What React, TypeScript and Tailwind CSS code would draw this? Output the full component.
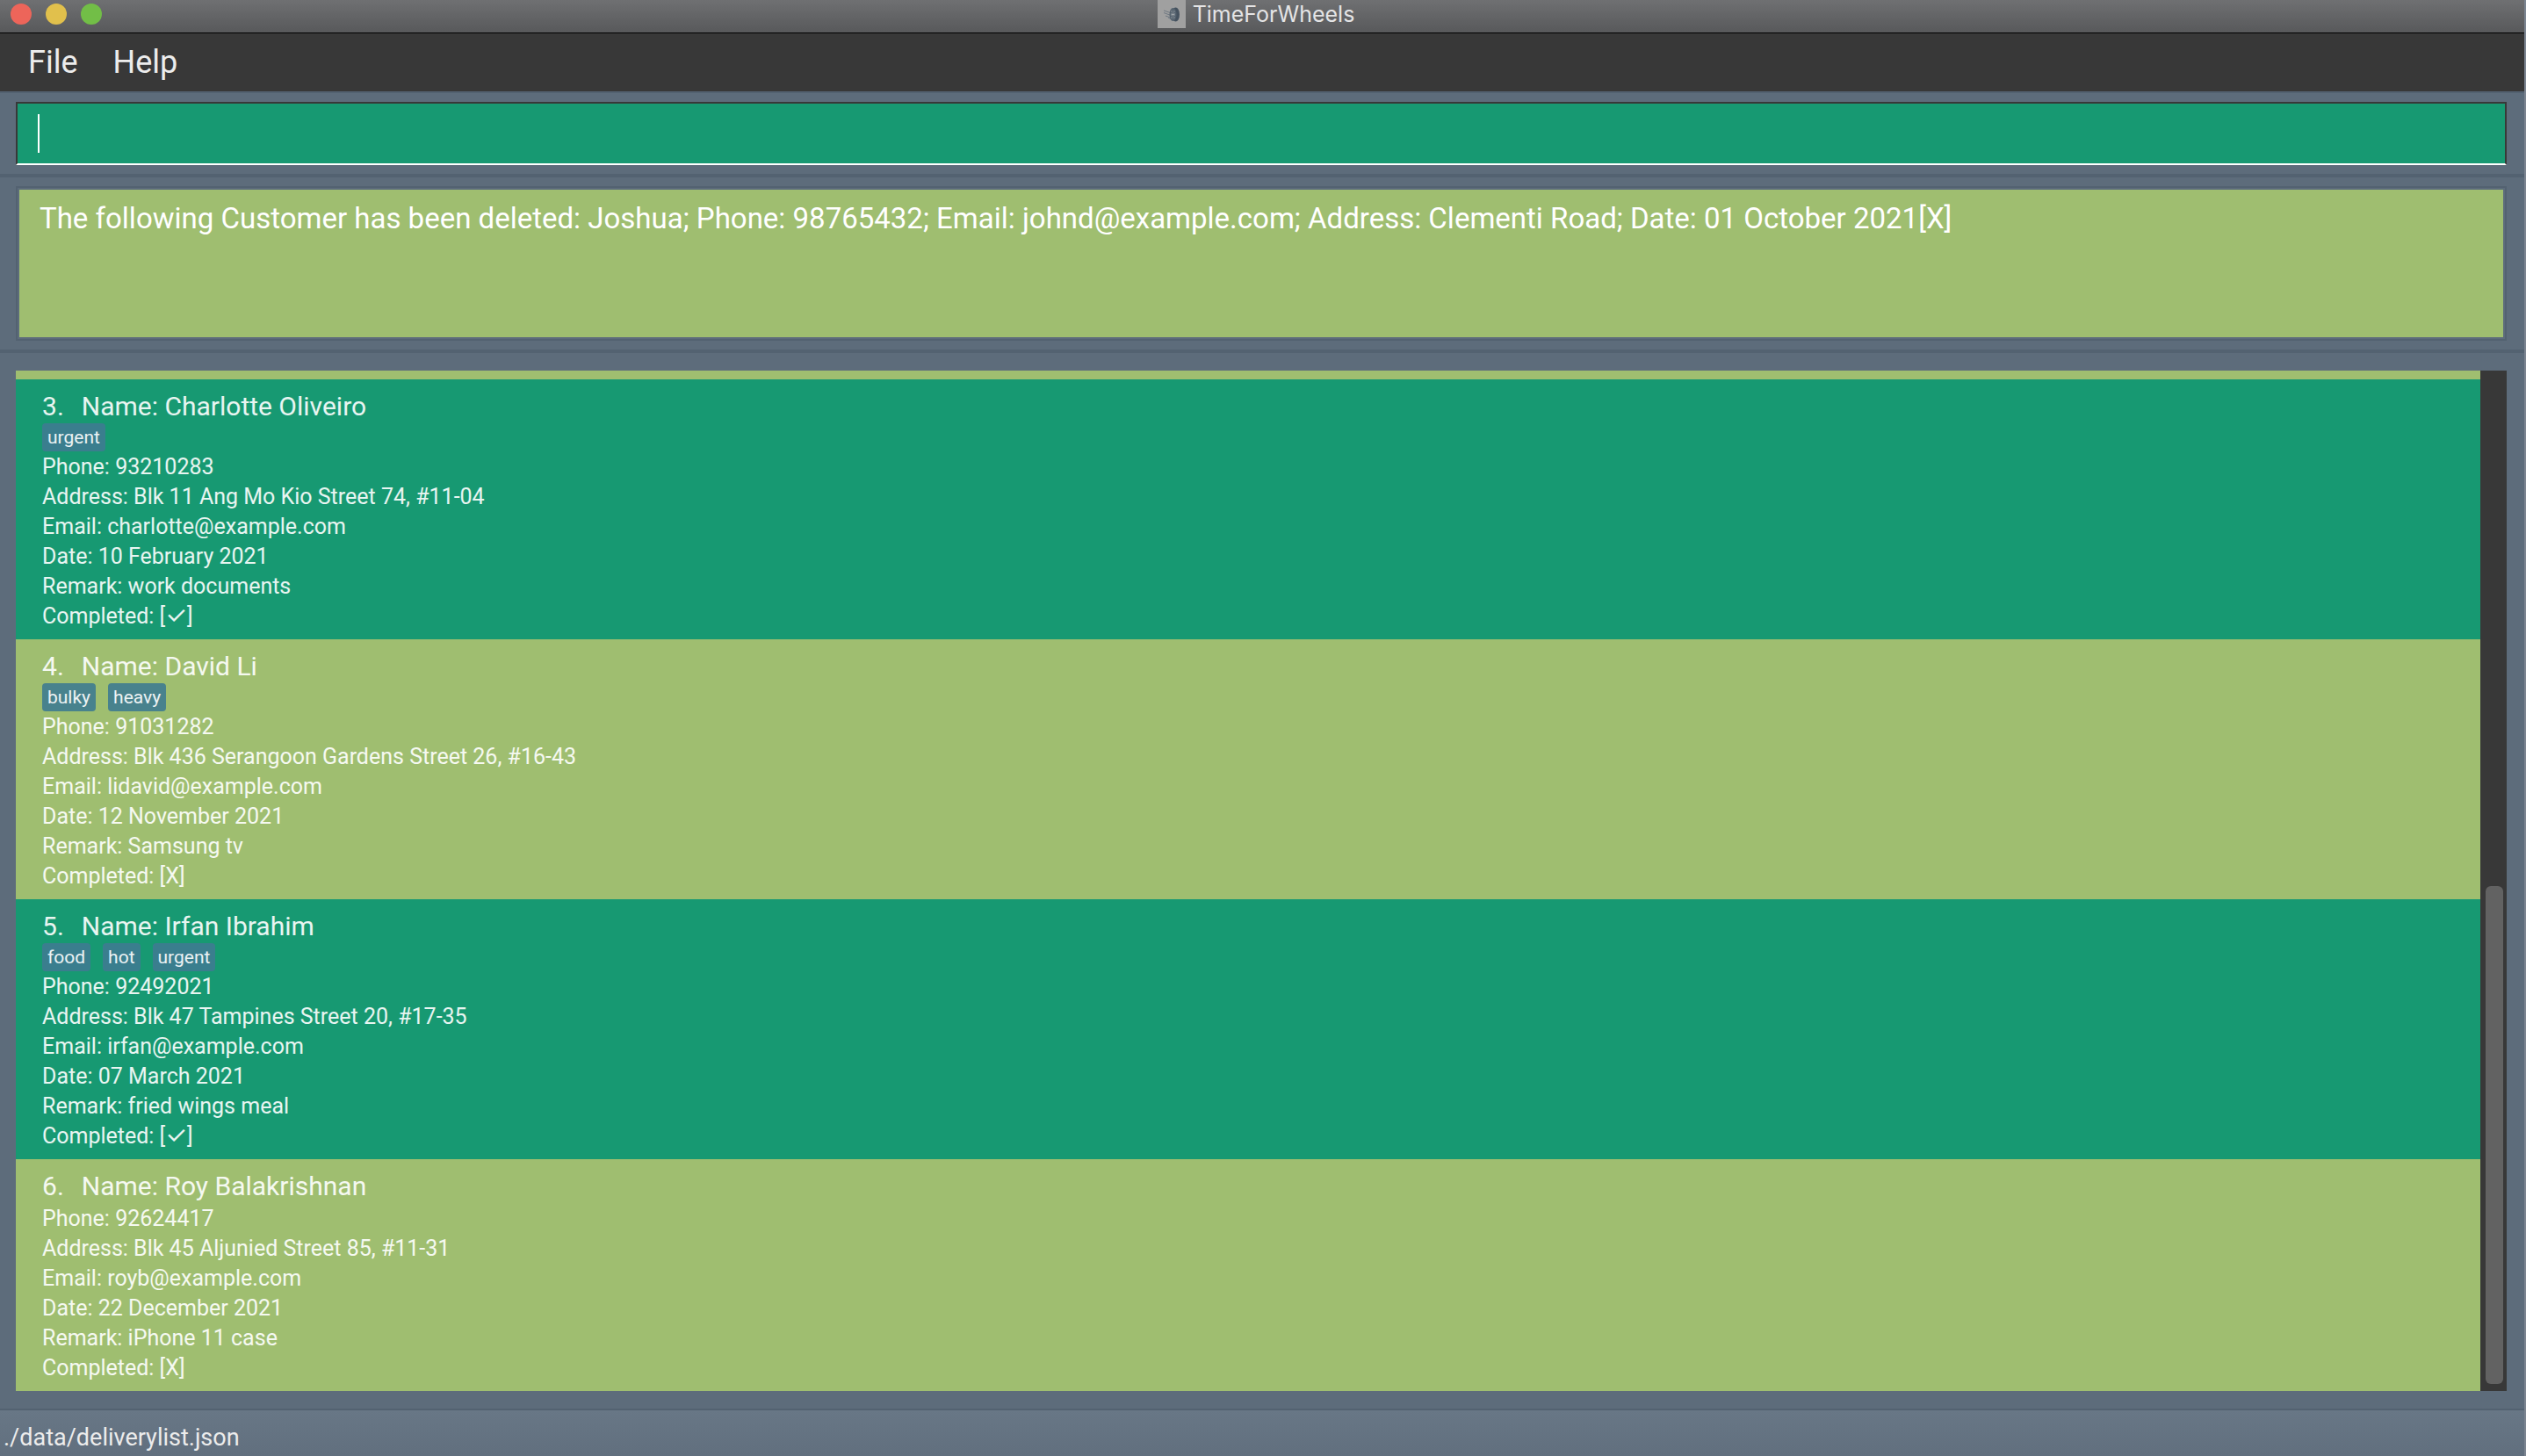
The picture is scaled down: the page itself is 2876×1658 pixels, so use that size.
type Customer = {
  index: number;
  name: string;
  tags: string[];
  phone: string;
  address: string;
  email: string;
  date: string;
  remark: string;
  done: boolean;
};

const customers: Customer[] = [
  { index: 3, name: "Charlotte Oliveiro", tags: ["urgent"], phone: "93210283", address: "Blk 11 Ang Mo Kio Street 74, #11-04", email: "charlotte@example.com", date: "10 February 2021", remark: "work documents", done: true },
  { index: 4, name: "David Li", tags: ["bulky", "heavy"], phone: "91031282", address: "Blk 436 Serangoon Gardens Street 26, #16-43", email: "lidavid@example.com", date: "12 November 2021", remark: "Samsung tv", done: false },
  { index: 5, name: "Irfan Ibrahim", tags: ["food", "hot", "urgent"], phone: "92492021", address: "Blk 47 Tampines Street 20, #17-35", email: "irfan@example.com", date: "07 March 2021", remark: "fried wings meal", done: true },
  { index: 6, name: "Roy Balakrishnan", tags: [], phone: "92624417", address: "Blk 45 Aljunied Street 85, #11-31", email: "royb@example.com", date: "22 December 2021", remark: "iPhone 11 case", done: false },
];

function WheelIcon() {
  return (
    <svg viewBox="0 0 32 32" className="size-8 bg-[#a0a0a0]" aria-hidden="true">
      <path d="M7 12l9 3M7 14.500l8 3M9 18l7 2.500M12 20l5 3" stroke="#6f7882" strokeWidth="1" fill="none" />
      <ellipse cx="20.500" cy="16.500" rx="4.500" ry="8" fill="#45525f" />
      <ellipse cx="17.500" cy="16.500" rx="4" ry="7.500" fill="#56636f" />
      <ellipse cx="17.500" cy="16.500" rx="2.500" ry="5.500" fill="#7b858e" />
      <path d="M17.500 11v11M15 14l5 5M15 19l5-5" stroke="#4c5965" strokeWidth="1" />
      <circle cx="17.500" cy="16.500" r="1.300" fill="#a4a9ad" />
    </svg>
  );
}

function TitleBar() {
  return (
    <header className="relative flex h-[38px] items-start justify-center border-b border-black bg-linear-to-b from-[#6f7072] to-[#58595b]">
      <div className="absolute top-1 left-3 flex gap-4">
        <button aria-label="Close" className="size-6 rounded-full bg-[#ed655a]" />
        <button aria-label="Minimize" className="size-6 rounded-full bg-[#e1c04c]" />
        <button aria-label="Zoom" className="size-6 rounded-full bg-[#72be47]" />
      </div>
      <div className="flex h-8 items-center gap-2 pr-[14px]">
        <WheelIcon />
        <h1 className="font-['Inter',sans-serif] text-[25px] leading-[34px] text-[#e4e4e5]">TimeForWheels</h1>
      </div>
    </header>
  );
}

function CustomerCard({ customer }: { customer: Customer }) {
  const odd = customer.index % 2 === 1;
  return (
    <li className={`px-[30px] pt-3 pb-[9px] text-white/90 ${odd ? "bg-[#179972]" : "bg-[#9fbe70]"}`}>
      <h2 className="flex gap-5 text-[30px] leading-[38px]">
        <span>{customer.index}.</span>
        <span>Name: {customer.name}</span>
      </h2>
      {customer.tags.length > 0 && (
        <ul className="flex gap-[14px]">
          {customer.tags.map((tag) => (
            <li key={tag} className={`rounded-sm px-[6px] text-[21px] leading-8 ${odd ? "bg-[#3a7e8e]" : "bg-[#48828d]"}`}>
              {tag}
            </li>
          ))}
        </ul>
      )}
      <div className="pt-px text-[25px] leading-[34px]">
        <p>Phone: {customer.phone}</p>
        <p>Address: {customer.address}</p>
        <p>Email: {customer.email}</p>
        <p>Date: {customer.date}</p>
        <p>Remark: {customer.remark}</p>
        <p>
          Completed: [{customer.done ? <span className="text-[28px] leading-none">✓</span> : "X"}]
        </p>
      </div>
    </li>
  );
}

export default function App() {
  return (
    <div className="flex h-screen flex-col border-r-2 border-[#7b8490] bg-[#5d6c7b] font-['Roboto','Inter',sans-serif]">
      <TitleBar />
      <nav className="flex h-[66px] items-center gap-10 bg-[#383838] px-8 text-[36px] text-[#ececec]">
        <button>File</button>
        <button>Help</button>
      </nav>
      <section className="border-t-2 border-[#536271] px-[18px] pt-[10px] pb-[10px]">
        <div className="mr-[2px] flex h-[72px] items-center border-2 border-[#383838] border-b-white bg-[#179972] pl-[23px]">
          <span className="h-11 w-[2px] bg-white" />
          <input aria-label="Command" className="h-full flex-1 bg-transparent text-[33px] text-white outline-none" />
        </div>
      </section>
      <section className="border-y-4 border-[#536271] px-[18px] py-[10px]">
        <div className="mr-[2px] border-2 border-[#536271] p-[2px]">
          <div role="status" className="h-[168px] bg-[#9fbe70] px-[23px] py-3 text-[33px] leading-[42px] text-white">
            The following Customer has been deleted: Joshua; Phone: 98765432; Email: johnd@example.com; Address: Clementi Road; Date: 01 October 2021[X]
          </div>
        </div>
      </section>
      <main className="flex min-h-0 flex-1 py-5 pr-5 pl-[18px]">
        <ul className="min-w-0 flex-1 overflow-hidden">
          <li className="h-[10px] bg-[#9fbe70]" />
          {customers.map((customer) => (
            <CustomerCard key={customer.index} customer={customer} />
          ))}
        </ul>
        <div className="flex w-[30px] flex-col justify-end bg-[#383838] pt-2 pr-1 pb-2 pl-[6px]">
          <div className="h-[49.5%] rounded-md bg-[#626262]" />
        </div>
      </main>
      <footer className="h-[54px] border-t-2 border-[#536271] bg-linear-to-b from-[#687786] to-[#616f7e] pl-1 text-[27px] leading-[62px] text-[#ececec]">./data/deliverylist.json</footer>
    </div>
  );
}
